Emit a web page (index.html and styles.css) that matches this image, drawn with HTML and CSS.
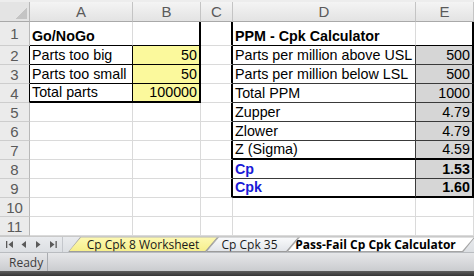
FILE: index.html
```html
<!DOCTYPE html>
<html lang="en">
  <head>
    <meta charset="UTF-8" />
    <meta name="viewport" content="width=device-width, initial-scale=1.0" />
    <title>Pass-Fail Cp Cpk Calculator</title>
    <link rel="stylesheet" href="styles.css">
  </head>
  <body>
    <div class="window">
      <div class="top-strip"></div>
      <div class="sheet">
        <!-- column headers -->
        <div class="cell corner"></div>
        <div class="cell col-head">A</div>
        <div class="cell col-head">B</div>
        <div class="cell col-head">C</div>
        <div class="cell col-head">D</div>
        <div class="cell col-head">E</div>

        <!-- row 1 -->
        <div class="cell row-head">1</div>
        <div class="cell bold line-b">Go/NoGo</div>
        <div class="cell line-b thick-r"></div>
        <div class="cell thick-r"></div>
        <div class="cell bold line-b">PPM - Cpk Calculator</div>
        <div class="cell line-b thick-r"></div>

        <!-- row 2 -->
        <div class="cell row-head edge">2</div>
        <div class="cell line-b line-r">Parts too big</div>
        <div class="cell yellow num line-b thick-r">50</div>
        <div class="cell thick-r"></div>
        <div class="cell dark-b dark-r">Parts per million above USL</div>
        <div class="cell grey num dark-b thick-r">500</div>

        <!-- row 3 -->
        <div class="cell row-head edge">3</div>
        <div class="cell line-b line-r">Parts too small</div>
        <div class="cell yellow num line-b thick-r">50</div>
        <div class="cell thick-r"></div>
        <div class="cell dark-b dark-r">Parts per million below LSL</div>
        <div class="cell grey num dark-b thick-r">500</div>

        <!-- row 4 -->
        <div class="cell row-head edge">4</div>
        <div class="cell thick-b line-r">Total parts</div>
        <div class="cell yellow num thick-b thick-r">100000</div>
        <div class="cell thick-r"></div>
        <div class="cell dark-b dark-r">Total PPM</div>
        <div class="cell grey num dark-b thick-r">1000</div>

        <!-- row 5 -->
        <div class="cell row-head">5</div>
        <div class="cell"></div>
        <div class="cell"></div>
        <div class="cell thick-r"></div>
        <div class="cell dark-b dark-r">Zupper</div>
        <div class="cell grey num dark-b thick-r">4.79</div>

        <!-- row 6 -->
        <div class="cell row-head">6</div>
        <div class="cell"></div>
        <div class="cell"></div>
        <div class="cell thick-r"></div>
        <div class="cell dark-b dark-r">Zlower</div>
        <div class="cell grey num dark-b thick-r">4.79</div>

        <!-- row 7 -->
        <div class="cell row-head">7</div>
        <div class="cell"></div>
        <div class="cell"></div>
        <div class="cell thick-r"></div>
        <div class="cell thick-b dark-r">Z (Sigma)</div>
        <div class="cell grey num thick-b thick-r">4.59</div>

        <!-- row 8 -->
        <div class="cell row-head">8</div>
        <div class="cell"></div>
        <div class="cell"></div>
        <div class="cell thick-r"></div>
        <div class="cell bold blue dark-b dark-r">Cp</div>
        <div class="cell grey num bold dark-b thick-r">1.53</div>

        <!-- row 9 -->
        <div class="cell row-head">9</div>
        <div class="cell"></div>
        <div class="cell"></div>
        <div class="cell thick-r"></div>
        <div class="cell bold blue thick-b dark-r">Cpk</div>
        <div class="cell grey num bold thick-b thick-r">1.60</div>

        <!-- row 10 -->
        <div class="cell row-head">10</div>
        <div class="cell"></div>
        <div class="cell"></div>
        <div class="cell"></div>
        <div class="cell"></div>
        <div class="cell"></div>

        <!-- row 11 -->
        <div class="cell row-head">11</div>
        <div class="cell"></div>
        <div class="cell"></div>
        <div class="cell"></div>
        <div class="cell"></div>
        <div class="cell"></div>
      </div>

      <div class="tab-bar">
        <div class="tab-nav">
          <svg width="62" height="15" viewBox="0 0 62 15">
            <rect x="6" y="4" width="1.3" height="7" fill="#5a5a5a" />
            <path d="M13 4 L8.5 7.5 L13 11 Z" fill="#5a5a5a" />
            <path d="M26 4 L21.5 7.5 L26 11 Z" fill="#5a5a5a" />
            <path d="M36 4 L40.5 7.5 L36 11 Z" fill="#5a5a5a" />
            <path d="M50 4 L54.5 7.5 L50 11 Z" fill="#5a5a5a" />
            <rect x="55.5" y="4" width="1.3" height="7" fill="#5a5a5a" />
          </svg>
        </div>
        <div class="tab tab-yellow"><span class="tab-face">Cp Cpk 8 Worksheet</span></div>
        <div class="tab tab-plain"><span class="tab-face">Cp Cpk 35</span></div>
        <div class="tab tab-active"><span class="tab-face">Pass-Fail Cp Cpk Calculator</span></div>
      </div>

      <div class="status-bar">
        <span class="status-text">Ready</span>
      </div>
      <div class="bottom-band"></div>
    </div>
  </body>
</html>
```

FILE: styles.css
```css
body {
  margin: 0;
  background: #fff;
  font-family: "Liberation Sans", Arial, sans-serif;
}

.window {
  width: 474px;
  height: 276px;
  overflow: hidden;
  display: flex;
  flex-direction: column;
}

.top-strip {
  height: 3px;
  background: #ededed;
}

/* grid of cells */
.sheet {
  display: grid;
  grid-template-columns: 30px 103px 68px 32px 183px 58px;
  grid-template-rows: 20px 24px repeat(10, 19px);
}

.cell {
  box-sizing: border-box;
  border-right: 1px solid #dadada;
  border-bottom: 1px solid #dadada;
  display: flex;
  align-items: flex-end;
  padding: 0 2px 0 2px;
  font-size: 14.3px;
  line-height: 17px;
  color: #000;
  white-space: nowrap;
  overflow: hidden;
}

.corner {
  background: #e4e4e4 linear-gradient(135deg, transparent 50%, #c4c4c4 50%) no-repeat right 2px bottom 2px / 11px 11px;
  border-right-color: #b8b8b8;
  border-bottom-color: #a9a9a9;
}

.col-head {
  justify-content: center;
  align-items: center;
  padding: 0;
  background: linear-gradient(#f4f4f4, #e3e3e3);
  border-right-color: #c4c4c4;
  border-bottom-color: #a9a9a9;
  color: #5a5a5a;
  font-size: 15px;
}

.row-head {
  justify-content: center;
  align-items: center;
  padding: 0;
  background: #ebebeb;
  border-right-color: #b8b8b8;
  border-bottom-color: #cdcdcd;
  color: #5a5a5a;
  font-size: 15px;
}

.row-head.edge {
  border-right-color: #000;
}

.bold {
  font-weight: bold;
}

.blue {
  color: #1a1ad6;
}

.num {
  justify-content: flex-end;
}

.yellow {
  background: #fbf99c;
}

.grey {
  background: #d6d6d6;
}

.line-b {
  border-bottom-color: #000;
}

.line-r {
  border-right-color: #000;
}

.dark-b {
  border-bottom-color: #3a3a3a;
}

.dark-r {
  border-right-color: #3a3a3a;
}

.thick-b {
  border-bottom: 2px solid #000;
}

.thick-r {
  border-right: 2px solid #000;
}

/* sheet tabs */
.tab-bar {
  height: 15px;
  display: flex;
  background: linear-gradient(#e9ebee, #dcdfe3);
  border-top: 1px solid #c9c9c9;
}

.tab-nav {
  width: 62px;
  flex: none;
  border-right: 1px solid #c4c7cc;
  margin-right: 5px;
}

.tab-nav svg {
  display: block;
}

.tab {
  flex: none;
  height: 15px;
  margin-left: -12px;
  display: flex;
  background: #9c9c9c;
  clip-path: polygon(12px 0, 100% 0, calc(100% - 12px) 100%, 0 100%);
}

.tab-face {
  flex: 1;
  margin: 0 1px 1px 1px;
  display: flex;
  align-items: center;
  justify-content: center;
  clip-path: polygon(12px 0, 100% 0, calc(100% - 12px) 100%, 0 100%);
  font-family: "Open Sans", sans-serif;
  font-size: 12px;
  color: #1a1a1a;
  white-space: nowrap;
}

.tab-yellow {
  width: 150px;
  margin-left: 0;
}

.tab-yellow .tab-face {
  background: linear-gradient(#fdf9b4, #f6ef8c);
}

.tab-plain {
  width: 93px;
}

.tab-plain .tab-face {
  background: linear-gradient(#fafbfc, #e2e5e9);
  padding-right: 6px;
}

.tab-active {
  width: 188px;
  background: #a5a5a5;
}

.tab-active .tab-face {
  background: #fff;
  font-weight: bold;
  padding-right: 11px;
  color: #000;
}

/* status bar */
.status-bar {
  height: 18px;
  display: flex;
  align-items: center;
  background: linear-gradient(#e6e7e9, #cacccf);
  border-top: 1px solid #b9bcc0;
}

.status-text {
  width: 48px;
  height: 18px;
  box-sizing: border-box;
  padding-left: 9px;
  display: flex;
  align-items: center;
  border-right: 1px solid #a9acb0;
  font-family: "Open Sans", sans-serif;
  font-size: 12px;
  color: #3d3d3d;
}

.bottom-band {
  height: 6px;
  background: linear-gradient(#5e5e5e, #353535);
}
```
